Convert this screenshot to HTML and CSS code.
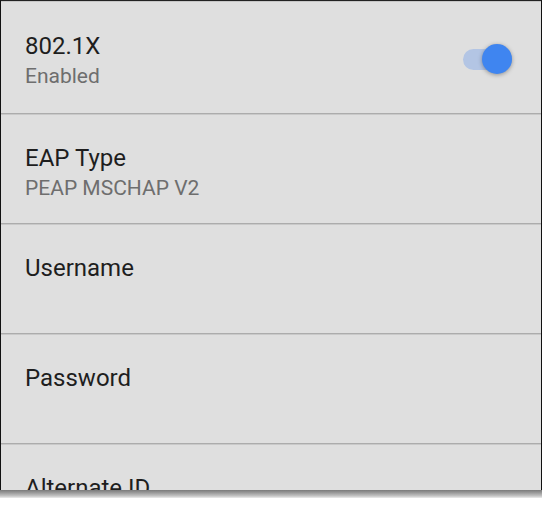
FILE: index.html
```html
<!DOCTYPE html>
<html>
<head>
<meta charset="utf-8">
<link rel="stylesheet" href="styles.css">
</head>
<body>
<div class="frame">
  <div class="topline"></div>
  <div class="list">
    <div class="row first">
      <div class="text">
        <div class="title">802.1X</div>
        <div class="sub">Enabled</div>
      </div>
      <div class="switch"><span class="track"></span><span class="thumb"></span></div>
    </div>
    <div class="row">
      <div class="text">
        <div class="title">EAP Type</div>
        <div class="sub">PEAP MSCHAP V2</div>
      </div>
    </div>
    <div class="row">
      <div class="text">
        <div class="title">Username</div>
      </div>
    </div>
    <div class="row">
      <div class="text">
        <div class="title">Password</div>
      </div>
    </div>
    <div class="row">
      <div class="text">
        <div class="title">Alternate ID</div>
      </div>
    </div>
  </div>
</div>
<div class="shadow"></div>
</body>
</html>
```

FILE: styles.css
```css
html, body {
  margin: 0;
  padding: 0;
  background: #ffffff;
}
body {
  font-family: Roboto, "Noto Sans", sans-serif;
}
.frame {
  width: 540px;
  height: 489px;
  border-left: 1px solid #111;
  border-right: 1px solid #111;
  border-top: 1px solid #222;
  background: #dfdfdf;
  overflow: hidden;
}
.topline {
  height: 1px;
  background: #c6c6c6;
}
.row {
  height: 109px;
  border-bottom: 1px solid #acacac;
  box-shadow: 0 1px 0 #c9c9c9;
  display: flex;
  align-items: flex-start;
  justify-content: space-between;
  padding: 0 29px 0 24px;
  box-sizing: content-box;
}
.row.first {
  height: 111px;
}
.text {
  padding-top: 30px;
}
.title {
  font-size: 24px;
  line-height: 28px;
  color: #1e1e1e;
}
.sub {
  margin-top: 4px;
  font-size: 21px;
  line-height: 25px;
  color: #6e6e6e;
}
.switch {
  position: relative;
  width: 49px;
  height: 30px;
  margin-top: 42px;
}
.track {
  position: absolute;
  left: 0;
  top: 5px;
  width: 49px;
  height: 21px;
  border-radius: 11px;
  background: #b3c5e4;
}
.thumb {
  position: absolute;
  right: 0;
  top: 0;
  width: 30px;
  height: 30px;
  border-radius: 50%;
  background: #3f85f0;
  box-shadow: 0 1px 4px rgba(0,0,0,0.35);
}
.shadow {
  width: 542px;
  height: 8px;
  background: linear-gradient(to bottom, #7a7a7a 0%, #9a9a9a 35%, #c4c4c4 75%, #ececec 100%);
}
```
